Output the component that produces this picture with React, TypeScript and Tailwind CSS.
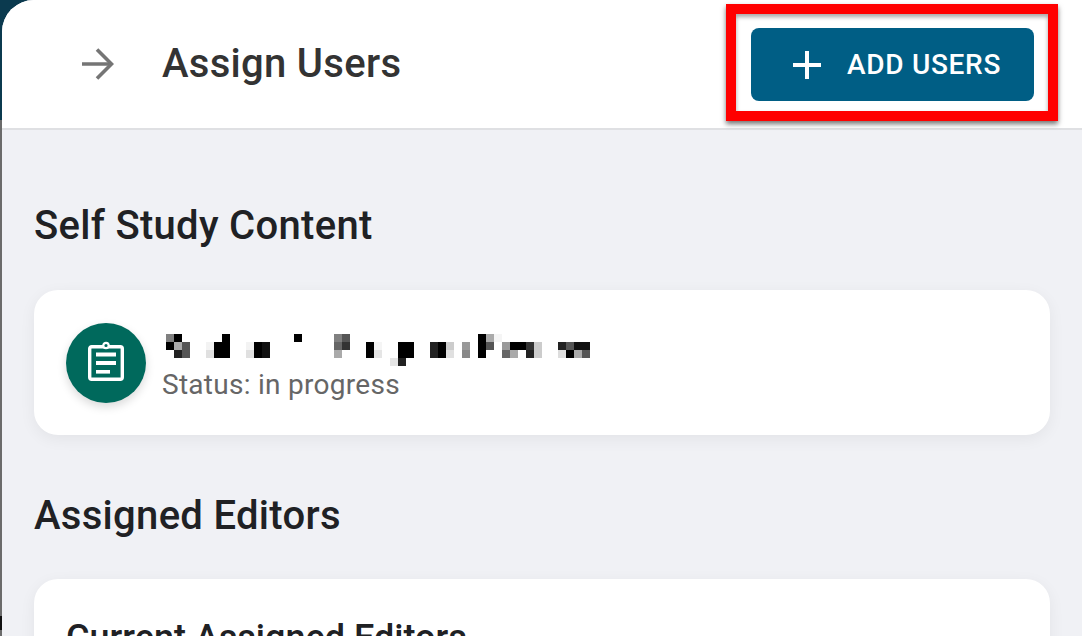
function Mosaic() {
  const cells: [number, number, string][] = [
    [0,0,"#808080"],[1,0,"#000000"],[0,1,"#000000"],[1,1,"#aaaaaa"],[2,1,"#555555"],[1,2,"#222222"],[2,2,"#555555"],
    [5,1,"#f3f3f3"],[6,1,"#000000"],[7,0,"#000000"],[7,1,"#000000"],[5,2,"#e0e0e0"],[6,2,"#000000"],[7,2,"#000000"],
    [10,1,"#f3f3f3"],[11,1,"#000000"],[12,1,"#111111"],[10,2,"#e0e0e0"],[11,2,"#000000"],[12,2,"#111111"],
    [16,0,"#000000"],
    [21,0,"#808080"],[22,0,"#555555"],[21,1,"#666666"],[22,1,"#333333"],[21,2,"#aaaaaa"],
    [25,1,"#000000"],[25,2,"#000000"],[26,1,"#f5f5f5"],[26,2,"#e5e5e5"],
    [29,1,"#000000"],[30,1,"#000000"],[29,2,"#000000"],[30,2,"#000000"],[28,3,"#e5e5e5"],[29,3,"#222222"],
    [33,1,"#222222"],[34,1,"#000000"],[35,1,"#cccccc"],[33,2,"#222222"],[34,2,"#000000"],[35,2,"#e0e0e0"],
    [37,1,"#999999"],[37,2,"#888888"],
    [39,0,"#000000"],[40,0,"#aaaaaa"],[41,0,"#f5f5f5"],[39,1,"#000000"],[40,1,"#555555"],[39,2,"#000000"],
    [42,1,"#999999"],[43,1,"#000000"],[44,1,"#000000"],[45,1,"#333333"],[46,1,"#cccccc"],[42,2,"#666666"],[43,2,"#aaaaaa"],[45,2,"#222222"],[46,2,"#cccccc"],
    [49,1,"#222222"],[50,1,"#555555"],[51,1,"#111111"],[52,1,"#111111"],[49,2,"#dddddd"],[50,2,"#000000"],[51,2,"#aaaaaa"],[52,2,"#555555"],
  ];
  return (
    <svg width="424" height="32" viewBox="0 0 424 32" className="block shrink-0 ml-[4px]">
      {cells.map(([x, y, c], i) => (
        <rect key={i} x={x * 8} y={y * 8} width="8" height="8" fill={c} />
      ))}
    </svg>
  );
}

export default function App() {
  return (
    <div className="w-[1082px] h-[636px] overflow-hidden bg-[linear-gradient(#0b3a4f_120px,#6b6b6b_120px,#6b6b6b_616px,#111111_616px,#111111_630px,#6b6b6b_630px)] font-['Roboto',sans-serif]">
      <div className="ml-[2px] h-full rounded-tl-[32px] overflow-hidden bg-[#f0f1f5] flex flex-col">
        <header className="h-[130px] shrink-0 bg-white border-b-2 border-[#dfe0e3] flex items-start">
          <svg width="32" height="32" viewBox="0 0 32 32" fill="none" className="ml-[80px] mt-[48px] shrink-0" stroke="#757575" strokeWidth="3.6">
            <path d="M0 16H29" />
            <path d="M15 1.5L29.5 16L15 30.5" />
          </svg>
          <h1 className="ml-[48px] mt-[44px] text-[40px] font-medium text-[#333333] leading-[40px] tracking-[0.3px]">Assign Users</h1>
          <div className="ml-auto mr-[24px] mt-[4px] w-[332px] h-[117px] border-[10px] border-[#ff0000] shadow-[0_3px_5px_rgba(0,0,0,0.55),inset_0_3px_4px_rgba(0,0,0,0.35)] flex items-start pl-[15px] pt-[14px]">
            <button className="w-[283px] h-[73px] rounded-[8px] bg-[#005e85] text-white flex items-center pl-[42px]">
              <svg width="28" height="28" viewBox="0 0 28 28" fill="#fff" className="shrink-0">
                <rect x="0" y="12" width="28" height="4" />
                <rect x="12" y="0" width="4" height="28" />
              </svg>
              <span className="ml-[26px] text-[28px] font-medium tracking-[0.7px] leading-none">ADD USERS</span>
            </button>
          </div>
        </header>
        <main className="px-[32px] pt-[74px]">
          <h2 className="text-[40px] leading-[44px] font-medium text-[#202124] tracking-[0.3px]">Self Study Content</h2>
          <section className="mt-[42px] h-[145px] rounded-[24px] bg-white shadow-[0_4px_16px_rgba(0,0,0,0.06)] flex items-center pl-[32px] w-[1016px]">
            <div className="w-[80px] h-[80px] rounded-full bg-[#00695c] shadow-[0_4px_10px_rgba(0,0,0,0.15)] flex items-center justify-center shrink-0">
              <svg width="40" height="44" viewBox="0 0 40 44" fill="none">
                <rect x="3.7" y="5.7" width="32.6" height="32.6" rx="2" stroke="#fff" strokeWidth="3.4" />
                <circle cx="20" cy="4.5" r="2.7" stroke="#fff" strokeWidth="2.2" fill="#00695c" />
                <rect x="10" y="11.5" width="20" height="4" fill="#fff" />
                <rect x="10" y="20" width="20" height="4" fill="#fff" />
                <rect x="10" y="29" width="14" height="3.6" fill="#fff" />
              </svg>
            </div>
            <div className="ml-[16px] mt-[10px] flex flex-col">
              <Mosaic />
              <p className="mt-[3px] text-[28px] leading-[32px] text-[#666666] tracking-[0.28px]">Status: in progress</p>
            </div>
          </section>
          <h2 className="mt-[59px] text-[40px] leading-[44px] font-medium text-[#202124] tracking-[0.3px]">Assigned Editors</h2>
          <section className="mt-[41px] h-[200px] rounded-[24px] bg-white shadow-[0_4px_16px_rgba(0,0,0,0.06)] px-[32px] pt-[40px] w-[1016px]">
            <h3 className="text-[36px] leading-[38px] font-medium text-[#202124]">Current Assigned Editors</h3>
          </section>
        </main>
      </div>
    </div>
  );
}
